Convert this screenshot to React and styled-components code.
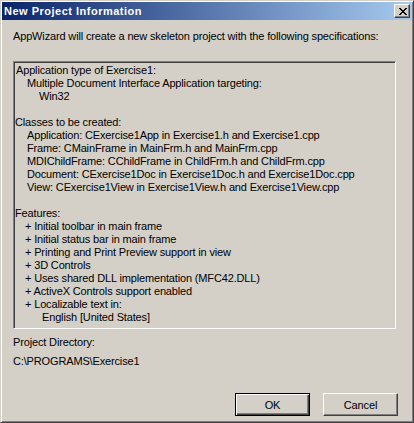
import React from "react";
import styled, { createGlobalStyle } from "styled-components";

const GlobalStyle = createGlobalStyle`
  html, body {
    margin: 0;
    padding: 0;
    background: #d4d0c8;
  }
  body {
    font-family: "Liberation Sans", Arial, sans-serif;
    font-size: 11px;
    letter-spacing: -0.15px;
    color: #000;
  }
`;

const summary = [
  { text: "Application type of Exercise1:", indent: 0 },
  { text: "Multiple Document Interface Application targeting:", indent: 12 },
  { text: "Win32", indent: 24 },
  { text: "", indent: 0 },
  { text: "Classes to be created:", indent: 0 },
  { text: "Application: CExercise1App in Exercise1.h and Exercise1.cpp", indent: 12 },
  { text: "Frame: CMainFrame in MainFrm.h and MainFrm.cpp", indent: 12 },
  { text: "MDIChildFrame: CChildFrame in ChildFrm.h and ChildFrm.cpp", indent: 12 },
  { text: "Document: CExercise1Doc in Exercise1Doc.h and Exercise1Doc.cpp", indent: 12 },
  { text: "View: CExercise1View in Exercise1View.h and Exercise1View.cpp", indent: 12 },
  { text: "", indent: 0 },
  { text: "Features:", indent: 0 },
  { text: "+ Initial toolbar in main frame", indent: 10 },
  { text: "+ Initial status bar in main frame", indent: 10 },
  { text: "+ Printing and Print Preview support in view", indent: 10 },
  { text: "+ 3D Controls", indent: 10 },
  { text: "+ Uses shared DLL implementation (MFC42.DLL)", indent: 10 },
  { text: "+ ActiveX Controls support enabled", indent: 10 },
  { text: "+ Localizable text in:", indent: 10 },
  { text: "English [United States]", indent: 27 },
];

const CloseGlyph = () => (
  <svg width="8" height="7" viewBox="0 0 8 7" shapeRendering="crispEdges">
    <path
      fill="#000"
      d="M0 0h2v1H0zM6 0h2v1H6zM1 1h2v1H1zM5 1h2v1H5zM2 2h4v1H2zM3 3h2v1H3zM2 4h4v1H2zM1 5h2v1H1zM5 5h2v1H5zM0 6h2v1H0zM6 6h2v1H6z"
    />
  </svg>
);

const App = () => {
  return (
    <>
      <GlobalStyle />
      <Window>
        <TitleBar>
          <Title>New Project Information</Title>
          <CloseButton aria-label="Close">
            <CloseGlyph />
          </CloseButton>
        </TitleBar>
        <Body>
          <Line>
            AppWizard will create a new skeleton project with the following
            specifications:
          </Line>
          <SummaryBox>
            {summary.map((row, i) => (
              <Line key={i} $indent={row.indent}>
                {row.text || "\u00a0"}
              </Line>
            ))}
          </SummaryBox>
          <DirLabel>Project Directory:</DirLabel>
          <DirPath>C:\PROGRAMS\Exercise1</DirPath>
          <Buttons>
            <PushButton $default>OK</PushButton>
            <PushButton>Cancel</PushButton>
          </Buttons>
        </Body>
      </Window>
    </>
  );
};

export default App;

const Window = styled.div`
  box-sizing: border-box;
  width: 414px;
  height: 423px;
  display: flex;
  flex-direction: column;
  padding: 1px;
  background: #d4d0c8;
  border: 1px solid;
  border-color: #d4d0c8 #404040 #404040 #d4d0c8;
  box-shadow: inset 1px 1px #ffffff, inset -1px -1px #808080;
`;

const TitleBar = styled.div`
  height: 18px;
  display: flex;
  align-items: center;
  justify-content: space-between;
  padding: 0 2px;
  background: linear-gradient(to right, #0a246a, #a6caf0);
`;

const Title = styled.span`
  color: #fff;
  font-weight: bold;
  font-size: 11px;
  letter-spacing: 0.5px;
  line-height: 13px;
  white-space: nowrap;
`;

const CloseButton = styled.button`
  box-sizing: border-box;
  width: 16px;
  height: 14px;
  padding: 0 0 0 1px;
  margin: 0;
  display: flex;
  align-items: center;
  justify-content: center;
  background: #d4d0c8;
  border: 1px solid;
  border-color: #ffffff #404040 #404040 #ffffff;
  box-shadow: inset -1px -1px #808080;
`;

const Body = styled.div`
  flex: 1;
  display: flex;
  flex-direction: column;
  padding: 10px 11px 5px 11px;
`;

const Line = styled.div`
  line-height: 13px;
  height: 13px;
  white-space: nowrap;
  padding-left: ${(p) => p.$indent || 0}px;
`;

const SummaryBox = styled.div`
  box-sizing: border-box;
  margin-top: 18px;
  width: 383px;
  height: 268px;
  padding: 2px 1px;
  border: 1px solid;
  border-color: #808080 #ffffff #ffffff #808080;
  box-shadow: inset 1px 1px #404040, inset -1px -1px #d4d0c8;
  overflow: hidden;
  & > div:first-child {
    padding-left: 1px;
  }
`;

const DirLabel = styled(Line)`
  margin-top: 7px;
`;

const DirPath = styled(Line)`
  margin-top: 6px;
`;

const Buttons = styled.div`
  margin-top: auto;
  display: flex;
  justify-content: flex-end;
  gap: 13px;
  padding-right: 3px;
`;

const PushButton = styled.button`
  box-sizing: border-box;
  width: 75px;
  height: 23px;
  margin: 0;
  padding: 0;
  font-family: "Liberation Sans", Arial, sans-serif;
  font-size: 11px;
  letter-spacing: -0.15px;
  color: #000;
  background: #d4d0c8;
  border: 1px solid;
  border-color: ${(p) =>
    p.$default ? "#000000" : "#ffffff #404040 #404040 #ffffff"};
  box-shadow: ${(p) =>
    p.$default
      ? "inset 1px 1px #ffffff, inset -1px -1px #404040, inset -2px -2px #808080"
      : "inset -1px -1px #808080"};
`;
